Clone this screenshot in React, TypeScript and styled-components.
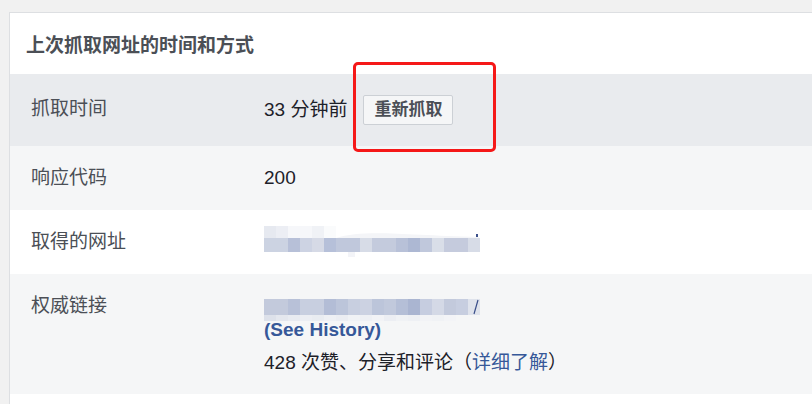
import React from "react";
import styled, { createGlobalStyle } from "styled-components";

const Global = createGlobalStyle`
  html, body { margin: 0; padding: 0; background: #f1f1f1; overflow: hidden; }
  body { font-family: "Liberation Sans", "Noto Sans CJK SC", sans-serif; }
`;

const Page = styled.div`
  padding: 12px 0 0 9px;
  height: 404px;
  box-sizing: border-box;
`;

const Card = styled.section`
  background: #fff;
  border: 1px solid #dddfe2;
  border-right: none;
  border-bottom: none;
  height: 100%;
`;

const Header = styled.h2`
  margin: 0;
  height: 61px;
  display: flex;
  align-items: center;
  padding: 0 16px;
  font-size: 19px;
  font-weight: bold;
  color: #4b4f56;
  background: #fff;
`;

const Row = styled.div<{ $bg: string; $pad?: number; $padBottom?: number }>`
  display: grid;
  grid-template-columns: 233px 1fr;
  padding: ${(p) => p.$pad ?? 20}px 21px ${(p) => p.$padBottom ?? p.$pad ?? 20}px;
  background: ${(p) => p.$bg};
  font-size: 19px;
  line-height: 24px;
`;

const Label = styled.div<{ $offset?: number }>`
  color: #4b4f56;
  margin-top: ${(p) => p.$offset ?? 0}px;
`;

const Value = styled.div<{ $center?: boolean }>`
  color: #1d2129;
  display: flex;
  flex-direction: ${(p) => (p.$center ? "row" : "column")};
  align-items: ${(p) => (p.$center ? "center" : "flex-start")};
  gap: ${(p) => (p.$center ? "16px" : "0")};
`;

const ButtonWrap = styled.span`
  position: relative;
  display: inline-flex;
`;

const Button = styled.button`
  height: 30px;
  padding: 0 10px;
  border: 1px solid #ccd0d5;
  border-radius: 2px;
  background: #f5f6f7;
  color: #4b4f56;
  font-family: "Liberation Sans", "Noto Sans CJK SC", sans-serif;
  font-size: 17px;
  font-weight: bold;
  line-height: 28px;
`;

const Annotation = styled.span`
  position: absolute;
  left: -10px;
  top: -33px;
  width: 143px;
  height: 90px;
  box-sizing: border-box;
  border: 3px solid #f51818;
  border-radius: 5px;
  pointer-events: none;
`;

const LinkBold = styled.a`
  color: #365899;
  font-weight: bold;
  text-decoration: none;
`;

const Link = styled.a`
  color: #365899;
  text-decoration: none;
`;

const Stats = styled.div`
  margin-top: 9px;
`;

const Mosaic = styled.svg`
  display: block;
  overflow: visible;
`;

const urlTop = ["#e6e9f0", "#eceef4", "#f6f7fa", "#f6f7fa", "#f0f2f6", "#fafbfc"];
const urlBottom = [
  "#ccd3e2", "#ccd3e2", "#b7c0d8", "#cdd3e3", "#d6dae6", "#b6c0d9", "#c0c8dc",
  "#c0c8dc", "#d7dce7", "#c4cbdd", "#c4cbdd", "#b8c1d8", "#adb8d3", "#c0c8dc",
  "#d9dee8", "#c5cbdd", "#c5cbdd", "#d7dce7",
];

const FetchedUrl = () => (
  <Mosaic width="216" height="24" viewBox="0 0 216 24">
    {urlTop.map((c, i) => (
      <rect key={i} x={i * 12} y={-4} width={12} height={12} fill={c} />
    ))}
    <path d="M72 8 C 100 -1, 140 5, 215 7 L 215 8 Z" fill="#f4f5f8" />
    {urlBottom.map((c, i) => (
      <rect key={i} x={i * 12} y={8} width={12} height={14} fill={c} />
    ))}
    <rect x="84" y="22" width="7" height="5" fill="#f3f4f8" />
    <rect x="212" y="4" width="2" height="3" fill="#3b4f8a" />
  </Mosaic>
);

const canonTop = [
  "#c3cadc", "#c3cadc", "#b8c1d8", "#c8cfe0", "#c8cfe0", "#b3bdd6", "#bcc5da",
  "#c8cfe0", "#ccd2e2", "#bcc5da", "#c1c9dc", "#b5bfd7", "#aab5d1", "#c6cde0",
  "#d4d9e6", "#c3cadc", "#c7cee0", "#dfe3ec",
];
const canonBottom = [
  "#dde1ea", "#e4e7ee", "#e8ebf1", "#eceef3", "#e9ecf1", "#eef0f4", "#ebedf2",
  "#f0f2f5", "#eef0f4", "#f2f3f6", "#eceef3", "#f0f2f5", "#eef0f4", "#f2f3f6",
  "#f0f2f5", "#f3f4f7",
];

const CanonicalUrl = () => (
  <Mosaic width="216" height="24" viewBox="0 0 216 24">
    {canonTop.map((c, i) => (
      <rect key={i} x={i * 12} y={5} width={12} height={16} fill={c} />
    ))}
    {canonBottom.map((c, i) => (
      <rect key={i} x={i * 12} y={21} width={12} height={6} fill={c} />
    ))}
    <path d="M210 20 L214 6" stroke="#3b4f8a" strokeWidth="1.2" />
  </Mosaic>
);

export default function App() {
  return (
    <>
      <Global />
      <Page>
        <Card>
          <Header>上次抓取网址的时间和方式</Header>
          <Row $bg="#e9ebee" $pad={21}>
            <Label $offset={2}>抓取时间</Label>
            <Value $center>
              <span>33 分钟前</span>
              <ButtonWrap>
                <Button type="button">重新抓取</Button>
                <Annotation />
              </ButtonWrap>
            </Value>
          </Row>
          <Row $bg="#f5f6f7">
            <Label>响应代码</Label>
            <Value>200</Value>
          </Row>
          <Row $bg="#ffffff">
            <Label>取得的网址</Label>
            <Value>
              <FetchedUrl />
            </Value>
          </Row>
          <Row $bg="#f5f6f7" $padBottom={19}>
            <Label>权威链接</Label>
            <Value>
              <CanonicalUrl />
              <LinkBold href="#">(See History)</LinkBold>
              <Stats>
                428 次赞、分享和评论（<Link href="#">详细了解</Link>）
              </Stats>
            </Value>
          </Row>
        </Card>
      </Page>
    </>
  );
}
